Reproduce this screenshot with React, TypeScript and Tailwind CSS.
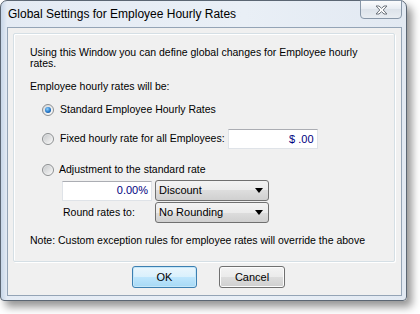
import React from 'react';

const font = { fontFamily: '"Liberation Sans", Arial, sans-serif' };

function Radio({ checked }: { checked?: boolean }) {
    return (
        <span className="w-[12px] h-[12px] rounded-full border border-[#8c8f91] bg-[linear-gradient(135deg,#d6d8da,#fdfdfd)] flex items-center justify-center shrink-0">
            {checked ? (
                <span className="w-[6px] h-[6px] rounded-full bg-[radial-gradient(circle_at_40%_35%,#8fd3ff,#1c6fc2_60%,#0d3e78)]" />
            ) : (
                <span className="w-[8px] h-[8px] rounded-full bg-[linear-gradient(135deg,#c9cbcd,#f4f4f4)]" />
            )}
        </span>
    );
}

function Combo({ value }: { value: string }) {
    return (
        <div className="w-[114px] h-[21px] rounded-[3px] border border-[#707070] bg-[linear-gradient(#f3f3f3_0%,#ebebeb_50%,#dddddd_50%,#d0d0d0_100%)] flex items-center pl-[3px] pr-[5px] text-[11px] text-black">
            <span className="flex-1">{value}</span>
            <svg width="8" height="5" viewBox="0 0 8 5">
                <path d="M0 0 H8 L4 5 Z" fill="#000" />
            </svg>
        </div>
    );
}

function TextBox({ value, w }: { value: string; w: string }) {
    return (
        <div className={`${w} h-[20px] bg-white border border-[#dfe3e8] border-t-[#abadb3] flex items-center justify-end pr-[3px] text-[11px] text-[#000080]`}>
            {value}
        </div>
    );
}

export default function App() {
    return (
        <div className="w-[420px] h-[314px] bg-white overflow-hidden" style={font}>
            {/* Window frame */}
            <div className="w-[407px] h-[301px] flex flex-col rounded-t-[7px] rounded-b-[4px] border border-[#5b6673] bg-[linear-gradient(90deg,#c7d6e8_0px,#e4ebf4_6px,#e9eff6_60%,#e2e9f2_100%)] shadow-[5px_6px_9px_rgba(0,0,0,0.42)]">
                {/* Title bar */}
                <div className="h-[26px] flex items-start">
                    <span className="ml-[7px] mt-[6px] text-[12px] leading-[14px] text-black">
                        Global Settings for Employee Hourly Rates
                    </span>
                    <div className="ml-auto mr-[4px] -mt-px w-[42px] h-[19px] rounded-b-[4px] border border-[#8897a8] bg-[linear-gradient(#fbfcfd,#e6ebf1_50%,#dde3ea_50%,#e8edf2)] flex items-center justify-center">
                        <svg width="13" height="10" viewBox="0 0 13 10">
                            <path
                                d="M1 1 H4 L6.5 3.3 L9 1 H12 L8.2 5 L12 9 H9 L6.5 6.7 L4 9 H1 L4.8 5 Z"
                                fill="#fdfdfd"
                                stroke="#6c737b"
                                strokeWidth="1"
                                strokeLinejoin="round"
                            />
                        </svg>
                    </div>
                </div>

                {/* Client area */}
                <div className="flex-1 ml-[6px] mr-[4px] mb-[4px] border border-[#94a4b6] bg-[#f0f0f0] flex flex-col">
                    {/* Group box */}
                    <div className="mt-[5px] ml-[5px] mr-[6px] h-[229px] rounded-[2px] border border-[#d5dfe5] shadow-[inset_1px_1px_0_#ffffff,1px_1px_0_#ffffff] flex flex-col pl-[16px] text-[10.5px] text-black">
                        <p className="mt-[13px] leading-[11px] pr-[10px]">
                            Using this Window you can define global changes for Employee hourly rates.
                        </p>
                        <p className="mt-[12px] leading-[11px]">Employee hourly rates will be:</p>

                        <div className="mt-[8px] h-[20px] flex items-center">
                            <span className="ml-[12px]"><Radio checked /></span>
                            <span className="ml-[6px]">Standard Employee Hourly Rates</span>
                        </div>

                        <div className="mt-[9px] h-[20px] flex items-center">
                            <span className="ml-[12px]"><Radio /></span>
                            <span className="ml-[6px]">Fixed hourly rate for all Employees:</span>
                            <span className="ml-[3px]"><TextBox value="$ .00" w="w-[90px]" /></span>
                        </div>

                        <div className="mt-[13px] h-[16px] flex items-center">
                            <span className="ml-[12px]"><Radio /></span>
                            <span className="ml-[5px]">Adjustment to the standard rate</span>
                        </div>

                        <div className="mt-[2px] ml-[32px] flex items-center gap-[3px]">
                            <TextBox value="0.00%" w="w-[90px]" />
                            <Combo value="Discount" />
                        </div>

                        <div className="mt-[1px] ml-[32px] flex items-center gap-[3px]">
                            <span className="w-[90px] pl-[1px]">Round rates to:</span>
                            <Combo value="No Rounding" />
                        </div>

                        <p className="mt-[12px] leading-[11px]">
                            Note: Custom exception rules for employee rates will override the above
                        </p>
                    </div>

                    {/* Buttons */}
                    <div className="mt-[4px] pl-[124px] flex gap-[22px] text-[11px]">
                        <button className="w-[65px] h-[22px] rounded-[3px] border border-[#3c7fb1] bg-[linear-gradient(#eaf6fd_0%,#d9f0fc_50%,#bee6fd_50%,#a7d9f5_100%)] shadow-[inset_0_0_0_1px_#c5e7f9] text-black">
                            OK
                        </button>
                        <button className="w-[66px] h-[22px] rounded-[3px] border border-[#707070] bg-[linear-gradient(#f3f3f3_0%,#ebebeb_50%,#dddddd_50%,#cfcfcf_100%)] shadow-[inset_0_0_0_1px_#fcfcfc] text-black">
                            Cancel
                        </button>
                    </div>
                </div>
            </div>
        </div>
    );
}
